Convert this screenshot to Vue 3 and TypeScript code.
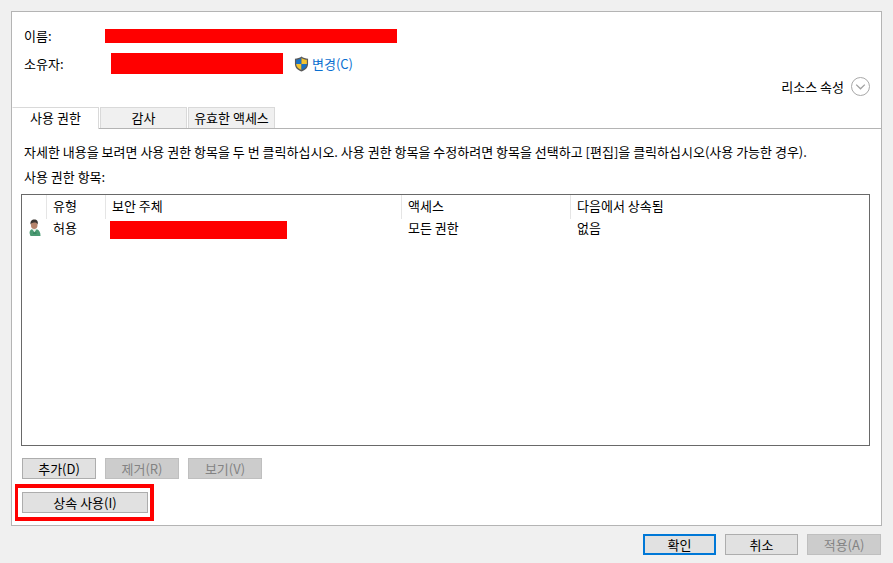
<script setup lang="ts">
interface Col { label: string; cls: string }
const cols: Col[] = [
  { label: '', cls: 'c-icon' },
  { label: '유형', cls: 'c-type' },
  { label: '보안 주체', cls: 'c-principal' },
  { label: '액세스', cls: 'c-access' },
  { label: '다음에서 상속됨', cls: 'c-inherit' },
]
const tabs = ['사용 권한', '감사', '유효한 액세스']
</script>

<template>
  <div class="page">
    <main class="panel">
      <div class="name-row">
        <span class="label">이름:</span>
        <span class="redact redact-name"></span>
      </div>
      <div class="owner-row">
        <span class="label owner-label">소유자:</span>
        <span class="redact redact-owner"></span>
        <svg class="shield" width="15" height="16" viewBox="0 0 16 17">
          <path d="M8 .5 C10 2 12.5 2.6 15 2.8 V8.5 C15 12.5 12 15 8 16.5 C4 15 1 12.5 1 8.5 V2.8 C3.5 2.6 6 2 8 .5Z" fill="#5a5a5a"/>
          <path d="M8 2 V8.5 H2.3 V4 C4.3 3.8 6.3 3.2 8 2Z" fill="#1a72c4"/>
          <path d="M8 2 C9.7 3.2 11.7 3.8 13.7 4 V8.5 H8Z" fill="#f4c430"/>
          <path d="M2.3 8.5 H8 V15 C4.8 13.7 2.5 11.6 2.3 8.5Z" fill="#f4c430"/>
          <path d="M8 8.5 H13.7 C13.5 11.6 11.2 13.7 8 15Z" fill="#1a72c4"/>
        </svg>
        <a class="change">변경(C)</a>
      </div>
      <div class="props-row">
        <span>리소스 속성</span>
        <svg class="chev" width="19" height="19" viewBox="0 0 19 19">
          <circle cx="9.5" cy="9.5" r="9" fill="none" stroke="#a8a8a8"/>
          <path d="M5.2 7.6 9.5 11.8 13.8 7.6" fill="none" stroke="#a0a0a0" stroke-width="1.3"/>
        </svg>
      </div>
      <div class="tabs">
        <div v-for="(t, i) in tabs" :key="t" class="tab" :class="{ active: i === 0 }">{{ t }}</div>
      </div>
      <section class="body">
        <p class="desc">자세한 내용을 보려면 사용 권한 항목을 두 번 클릭하십시오. 사용 권한 항목을 수정하려면 항목을 선택하고 [편집]을 클릭하십시오(사용 가능한 경우).</p>
        <p class="entries">사용 권한 항목:</p>
        <div class="list">
          <div class="head">
            <div v-for="c in cols" :key="c.cls" class="hcell" :class="c.cls">{{ c.label }}</div>
          </div>
          <div class="row">
            <div class="cell c-icon">
              <svg width="13" height="17" viewBox="0 0 13 17">
                <path d="M2.5 17 C1 14 1.2 11.5 3.5 10.3 L9 10.3 C11.5 11.2 12.5 13.5 12.5 17Z" fill="#4a9a72"/>
                <path d="M4 10 L6.4 13.2 L8.8 10Z" fill="#e4f0ea"/>
                <path d="M5 13.5 H8.5 V14.6 H5Z" fill="#2f7a58"/>
                <ellipse cx="6.2" cy="5.8" rx="3.3" ry="4.3" fill="#b5846c"/>
                <path d="M2.6 5.6 C2 2 3.8 .4 6.3 .4 C9 .4 10.4 2.2 9.7 5.4 C9 3.9 7.6 3.4 6 3.6 C4.5 3.7 3.4 4.2 2.6 5.6Z" fill="#3a3531"/>
              </svg>
            </div>
            <div class="cell c-type">허용</div>
            <div class="cell c-principal"><span class="redact redact-principal"></span></div>
            <div class="cell c-access">모든 권한</div>
            <div class="cell c-inherit">없음</div>
          </div>
        </div>
        <div class="actions">
          <button class="btn">추가(D)</button>
          <button class="btn disabled">제거(R)</button>
          <button class="btn disabled">보기(V)</button>
        </div>
        <div class="inherit-wrap">
          <button class="btn inherit">상속 사용(I)</button>
          <span class="highlight"></span>
        </div>
      </section>
    </main>
    <footer class="footer">
      <button class="btn primary">확인</button>
      <button class="btn narrow">취소</button>
      <button class="btn disabled">적용(A)</button>
    </footer>
  </div>
</template>

<style scoped>
.page {
  width: 893px;
  height: 563px;
  box-sizing: border-box;
  padding: 11px 11px 0 11px;
  background: #f0f0f0;
  overflow: hidden;
  font-family: "Noto Sans CJK KR", "Noto Sans", sans-serif;
  font-size: 13px;
  color: #000;
  line-height: 16px;
}
.panel {
  height: 515px;
  box-sizing: border-box;
  background: #fff;
  border: 1px solid #b4b4b4;
  display: flex;
  flex-direction: column;
}
.name-row {
  display: flex;
  align-items: center;
  height: 14px;
  margin-top: 17px;
  padding-left: 12px;
}
.label { width: 81px; }
.redact { display: block; background: #f00; }
.redact-name { width: 292px; height: 14px; }
.owner-row {
  display: flex;
  align-items: center;
  height: 21px;
  margin-top: 10px;
  padding-left: 12px;
}
.owner-label { width: 87px; }
.redact-owner { width: 172px; height: 21px; }
.shield { margin-left: 11px; }
.change { margin-left: 3px; color: #0a6fd0; }
.props-row {
  display: flex;
  justify-content: flex-end;
  align-items: center;
  gap: 7px;
  height: 19px;
  margin-top: 3px;
  padding-right: 11px;
}
.tabs {
  display: flex;
  height: 21px;
  margin-top: 11px;
  border-bottom: 1px solid #b4b4b4;
}
.tab {
  width: 87px;
  height: 21px;
  box-sizing: border-box;
  margin-right: 1px;
  background: #f0f0f0;
  border: 1px solid #d9d9d9;
  border-bottom: 0;
  text-align: center;
  line-height: 19px;
}
.tab.active {
  height: 22px;
  background: #fff;
  border-left-color: #fff;
  position: relative;
}
.body {
  flex: 1;
  display: flex;
  flex-direction: column;
  padding: 0 11px 0 9px;
}
.desc { margin: 15px 0 0 3px; height: 16px; white-space: nowrap; }
.entries { margin: 9px 0 0 3px; height: 16px; }
.list {
  height: 252px;
  box-sizing: border-box;
  margin-top: 9px;
  border: 1px solid #696969;
  background: #fff;
}
.head, .row { display: flex; }
.head { height: 24px; }
.row { height: 20px; }
.hcell { height: 24px; line-height: 22px; padding-left: 6px; box-sizing: border-box; border-right: 1px solid #e5e5e5; }
.cell { line-height: 18px; padding-left: 6px; box-sizing: border-box; }
.hcell.c-inherit { border-right: 0; }
.c-icon { width: 25px; }
.c-type { width: 59px; }
.c-principal { width: 296px; }
.c-access { width: 169px; }
.c-inherit { flex: 1; }
.cell.c-principal { padding-left: 4px; }
.cell svg { display: block; margin-top: 0; }
.redact-principal { width: 177px; height: 18px; margin-top: 2px; }
.actions {
  display: flex;
  gap: 9px;
  margin-top: 12px;
  padding-left: 1px;
}
.btn {
  width: 74px;
  height: 21px;
  padding: 0;
  box-sizing: border-box;
  font: inherit;
  line-height: 17px;
  color: #000;
  background: #e1e1e1;
  border: 1px solid #adadad;
}
.btn.disabled {
  color: #838383;
  background: #cccccc;
  border-color: #bfbfbf;
}
.inherit-wrap {
  position: relative;
  margin-top: 13px;
  padding-left: 1px;
  height: 21px;
}
.btn.inherit { width: 126px; display: block; }
.highlight {
  position: absolute;
  left: -6px;
  top: -8px;
  width: 139px;
  height: 37px;
  box-sizing: border-box;
  border: 4px solid #f00;
  border-left-width: 3px;
}
.footer {
  display: flex;
  justify-content: flex-end;
  gap: 9px;
  margin-top: 8px;
  padding-right: 1px;
}
.btn.narrow { width: 73px; }
.btn.primary {
  width: 73px;
  border: 2px solid #0078d7;
  line-height: 15px;
}
</style>

<style>
html, body { margin: 0; background: #f0f0f0; }
</style>
